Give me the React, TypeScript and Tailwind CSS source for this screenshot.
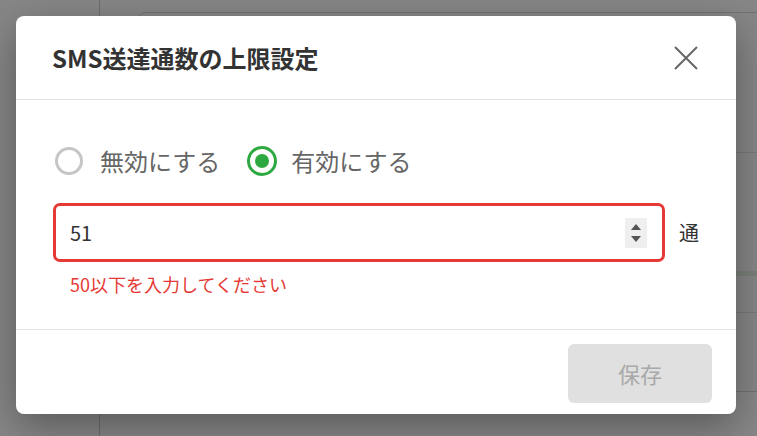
import { useState } from 'react'

export default function App() {
  const [enabled, setEnabled] = useState(true)
  const [limit, setLimit] = useState('51')

  const tooMany = Number(limit) > 50

  return (
    <div
      className="relative w-[757px] h-[436px] overflow-hidden bg-white"
      style={{ fontFamily: '"Noto Sans CJK JP", "Noto Sans", sans-serif' }}
    >
      {/* page behind the dialog */}
      <div className="flex h-full">
        <div className="w-[100px] shrink-0 border-r border-[#cfcfcf]" />
        <div className="pl-[38px] pt-[12px]">
          <div className="h-[380px] w-[700px] rounded-[8px] border border-[#d8d8d8]">
            <div className="mt-[139px] border-t border-[#e4e4e4]" />
            <div className="mt-[118px] h-[5px] bg-[#e9f2e6]" />
            <div className="mt-[36px] border-t border-[#e4e4e4]" />
          </div>
        </div>
      </div>

      {/* overlay */}
      <div className="absolute inset-0 bg-black/[0.47]" />

      {/* dialog */}
      <div className="absolute left-[16px] top-[16px] w-[720px] rounded-[8px] bg-white shadow-[0_12px_40px_rgba(0,0,0,0.35)]">
        <div className="flex h-[84px] items-center justify-between border-b border-[#e2e2e2] pl-[36px] pr-[38px]">
          <h2 className="text-[24px] font-bold text-[#333]">SMS送達通数の上限設定</h2>
          <button type="button" className="flex h-[24px] w-[24px] items-center justify-center">
            <svg width="24" height="24" viewBox="0 0 24 24" fill="none" stroke="#666" strokeWidth="2">
              <path d="M1 1L23 23M23 1L1 23" />
            </svg>
          </button>
        </div>

        <div className="px-[37px] pt-[45px] pb-[32px]">
          <div className="flex h-[32px] items-center text-[24px] text-[#666]">
            <label className="ml-[2px] flex items-center cursor-pointer" onClick={() => setEnabled(false)}>
              <span
                className={
                  enabled
                    ? 'h-[28px] w-[28px] rounded-full border-[3px] border-[#c6c6c6]'
                    : 'flex h-[28px] w-[28px] items-center justify-center rounded-full border-[3px] border-[#2ea840]'
                }
              >
                {!enabled && <span className="h-[14px] w-[14px] rounded-full bg-[#2ea840]" />}
              </span>
              <span className="ml-[17px]">無効にする</span>
            </label>
            <label className="ml-[27px] flex items-center cursor-pointer" onClick={() => setEnabled(true)}>
              <span
                className={
                  enabled
                    ? 'flex h-[30px] w-[30px] items-center justify-center rounded-full border-[3px] border-[#2ea840]'
                    : 'h-[30px] w-[30px] rounded-full border-[3px] border-[#c6c6c6]'
                }
              >
                {enabled && <span className="h-[14px] w-[14px] rounded-full bg-[#2ea840]" />}
              </span>
              <span className="ml-[14px]">有効にする</span>
            </label>
          </div>

          <div className="mt-[26px] flex items-center">
            <div
              className={
                tooMany
                  ? 'flex h-[59px] w-[613px] items-center rounded-[7px] border-[3px] border-[#e53935] pl-[14px] pr-[15px]'
                  : 'flex h-[59px] w-[613px] items-center rounded-[7px] border-[3px] border-[#ccc] pl-[14px] pr-[15px]'
              }
            >
              <input
                value={limit}
                onChange={(e) => setLimit(e.target.value)}
                className="flex-1 bg-transparent text-[20px] text-[#333] outline-none"
              />
              <div className="flex h-[30px] w-[22px] flex-col items-center justify-center gap-[6px] bg-[#efefef]">
                <svg width="10" height="6" viewBox="0 0 10 6">
                  <path d="M5 0L10 6H0Z" fill="#555" />
                </svg>
                <svg width="10" height="6" viewBox="0 0 10 6">
                  <path d="M0 0H10L5 6Z" fill="#555" />
                </svg>
              </div>
            </div>
            <span className="ml-[14px] text-[20px] text-[#333]">通</span>
          </div>

          {tooMany ? (
            <p className="mt-[9px] h-[26px] pl-[17px] text-[18px] leading-[26px] text-[#e53935]">
              50以下を入力してください
            </p>
          ) : (
            <div className="mt-[9px] h-[26px]" />
          )}
        </div>

        <div className="flex justify-end border-t border-[#e2e2e2] pt-[14px] pb-[11px] pr-[24px]">
          <button
            type="button"
            disabled
            className="h-[59px] w-[144px] rounded-[6px] bg-[#e0e0e0] text-[22px] text-[#a9a9a9]"
          >
            保存
          </button>
        </div>
      </div>
    </div>
  )
}
